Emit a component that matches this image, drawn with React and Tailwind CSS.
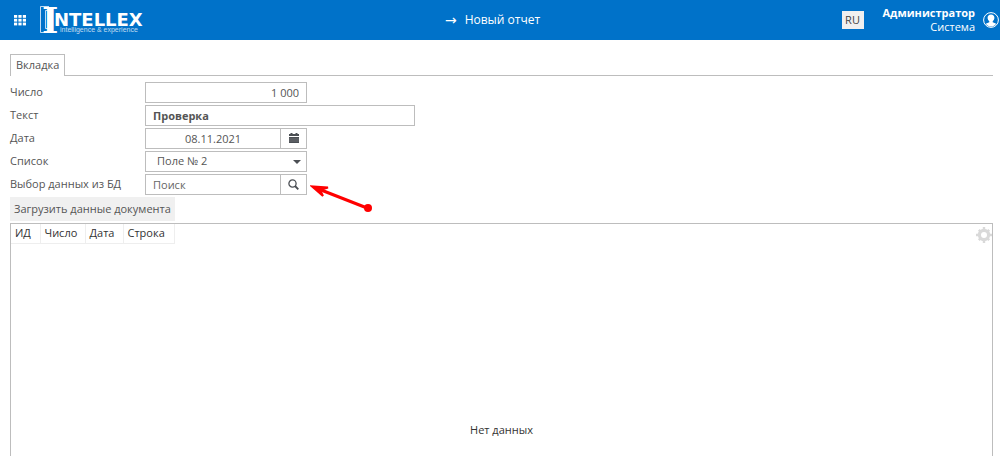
import React, { useState } from "react";

const columns = ["ИД", "Число", "Дата", "Строка"];
const columnWidths = ["w-[29px]", "w-[45px]", "w-[38px]", "w-[51px]"];

const fieldBox = "h-[21px] border border-[#bdbdbd] bg-white";

function Logo() {
  return (
    <svg width="103" height="40" viewBox="0 0 103 40" fill="#fff" role="img" aria-label="Intellex">
      <path d="M9 6.500H.5V32.500H9M8 10.500H5.500V28.500H8" fill="none" stroke="#fff" strokeOpacity="0.75" />
      <text x="2" y="33" fontSize="35" fontWeight="bold" fontFamily="DejaVu Serif, serif">I</text>
      <text x="14" y="26" fontSize="18" fontWeight="bold" fontFamily="DejaVu Sans, sans-serif">NTELLEX</text>
      <text x="20" y="32" fontSize="7" fillOpacity="0.75" fontFamily="Liberation Sans, sans-serif">intelligence &amp; experience</text>
    </svg>
  );
}

function AppsIcon() {
  return (
    <svg width="12" height="11" viewBox="0 0 12 11" fill="#fff" aria-hidden="true">
      {[0, 4.4, 8.8].map((x) =>
        [0, 3.8, 7.6].map((y) => <rect key={`${x}-${y}`} x={x} y={y} width="3.2" height="2.8" />)
      )}
    </svg>
  );
}

function UserIcon() {
  return (
    <svg width="16" height="16" viewBox="0 0 16 16" aria-hidden="true">
      <circle cx="8" cy="8" r="7.4" fill="none" stroke="#fff" />
      <path d="M8 2.400c-2.200 0-3.400 1.400-3.400 3.400 0 1.500.7 2.800 1.700 3.500v1L2.800 11.800C4 13.700 5.900 14.600 8 14.600s4-.9 5.200-2.800L9.700 10.300v-1c1-.7 1.700-2 1.700-3.500 0-2-1.200-3.400-3.400-3.400z" fill="#fff" />
    </svg>
  );
}

function CalendarIcon() {
  return (
    <svg width="10" height="11" viewBox="0 0 10 11" fill="#4b4f54" aria-hidden="true">
      <path d="M0 1h1.500V0h2v1h3V0h2v1H10v2H0z" />
      <path d="M0 4h10v6H0z" />
      <path d="M0 6h10M0 8h10" stroke="#fff" strokeOpacity=".3" strokeWidth=".6" />
    </svg>
  );
}

function SearchIcon() {
  return (
    <svg width="11" height="11" viewBox="0 0 11 11" fill="none" stroke="#4b4f54" aria-hidden="true">
      <circle cx="4.5" cy="4.5" r="3.6" strokeWidth="1.300" />
      <path d="M7 7l3.300 3.300" strokeWidth="1.900" />
    </svg>
  );
}

function GearIcon() {
  return (
    <svg width="16" height="16" viewBox="0 0 16 16" fill="none" stroke="#d9d9d9" aria-hidden="true">
      <circle cx="8" cy="8" r="4.600" strokeWidth="3.200" />
      <path d="M8 0v3M8 13v3M0 8h3M13 8h3M2.800 2.800l2 2M11.200 11.200l2 2M2.800 13.200l2-2M11.200 4.800l2-2" strokeWidth="2.400" />
    </svg>
  );
}

// red arrow pointing at the search button
function Pointer() {
  return (
    <svg className="pointer-events-none absolute left-[165px] top-[9px]" width="64" height="30" viewBox="0 0 64 30" aria-hidden="true">
      <path d="M57 25L6 5" stroke="#f00" strokeWidth="3" />
      <path d="M18 4.500L2 3.500L13 13L10 7Z" fill="#f00" stroke="#f00" strokeWidth="2" />
      <circle cx="58" cy="25" r="4" fill="#f00" />
    </svg>
  );
}

function Row({ id, label, children }) {
  return (
    <div className="flex h-[21px] items-center">
      <label htmlFor={id} className="w-[135px] shrink-0">{label}</label>
      {children}
    </div>
  );
}

function Header() {
  return (
    <header className="flex h-10 items-center bg-[#0072c9] pr-px text-white">
      <div className="flex flex-1 items-center">
        <button type="button" aria-label="Меню" className="ml-[14px] mr-[14px]"><AppsIcon /></button>
        <Logo />
      </div>
      <h1 className="flex items-center gap-2 pr-[14px] text-[12px] leading-5">
        <span className="font-['DejaVu_Sans',sans-serif] text-[14px]">→</span>
        <span>Новый отчет</span>
      </h1>
      <div className="flex flex-1 items-center justify-end">
        <button type="button" className="mr-[19px] h-[18px] w-[22px] bg-[#f0f0f0] text-[11px] leading-[18px] text-[#444]">RU</button>
        <div className="mr-2 text-right text-[11px] leading-[14px]">
          <div className="font-bold">Администратор</div>
          <div>Система</div>
        </div>
        <button type="button" aria-label="Профиль"><UserIcon /></button>
      </div>
    </header>
  );
}

function App() {
  const [number, setNumber] = useState("1 000");
  const [text, setText] = useState("Проверка");
  const [date, setDate] = useState("08.11.2021");
  const [item, setItem] = useState("2");
  const [search, setSearch] = useState("");

  return (
    <div className="flex min-h-screen flex-col bg-white font-['Open_Sans',sans-serif] text-[11px] text-[#555]">
      <Header />

      <main className="ml-[10px] mr-[7px] flex flex-1 flex-col pt-[14px]">
        <div role="tablist" className="flex border-b border-[#bdbdbd]">
          <button type="button" role="tab" aria-selected="true" className="-mb-px h-[22px] border border-b-0 border-[#bdbdbd] bg-white px-[5px]">
            Вкладка
          </button>
        </div>

        <form className="mt-[6px] flex flex-col gap-[2px]" onSubmit={(e) => e.preventDefault()}>
          <Row id="number" label="Число">
            <input id="number" value={number} onChange={(e) => setNumber(e.target.value)} className={`${fieldBox} w-[162px] px-[7px] text-right`} />
          </Row>
          <Row id="text" label="Текст">
            <input id="text" value={text} onChange={(e) => setText(e.target.value)} className={`${fieldBox} w-[270px] px-[7px] font-bold`} />
          </Row>
          <Row id="date" label="Дата">
            <input id="date" value={date} onChange={(e) => setDate(e.target.value)} className={`${fieldBox} w-[136px] text-center`} />
            <button type="button" aria-label="Календарь" className={`${fieldBox} -ml-px flex w-[27px] items-center justify-center`}><CalendarIcon /></button>
          </Row>
          <Row id="list" label="Список">
            <div className="relative">
              <select id="list" value={item} onChange={(e) => setItem(e.target.value)} className={`${fieldBox} block w-[162px] appearance-none px-[11px]`}>
                <option value="1">Поле № 1</option>
                <option value="2">Поле № 2</option>
              </select>
              <svg className="pointer-events-none absolute right-[6px] top-[9px]" width="8" height="4" viewBox="0 0 8 4" fill="#4b4f54" aria-hidden="true">
                <path d="M0 0h8L4 4z" />
              </svg>
            </div>
          </Row>
          <Row id="search" label="Выбор данных из БД">
            <div className="relative flex">
              <input id="search" value={search} placeholder="Поиск" onChange={(e) => setSearch(e.target.value)} className={`${fieldBox} w-[136px] px-[7px] placeholder:text-[#666]`} />
              <button type="button" aria-label="Найти" className={`${fieldBox} -ml-px flex w-[27px] items-center justify-center`}><SearchIcon /></button>
              <Pointer />
            </div>
          </Row>
        </form>

        <button type="button" className="mt-[2px] h-6 self-start bg-[#f0f0f0] px-1">
          Загрузить данные документа
        </button>

        <section className="relative mt-[2px] flex flex-1 flex-col border border-b-0 border-[#bdbdbd]">
          <table className="table-fixed self-start text-left text-[#333]">
            <thead>
              <tr>
                {columns.map((name, i) => (
                  <th key={name} className={`${columnWidths[i]} h-[19px] border-b border-r border-[#eee] p-0 pl-1 font-normal leading-[18px]`}>
                    {name}
                  </th>
                ))}
              </tr>
            </thead>
          </table>
          <button type="button" aria-label="Настройки" className="absolute right-0 top-[3px]"><GearIcon /></button>
          <p className="mt-auto pb-[18px] text-center text-[#333]">Нет данных</p>
        </section>
      </main>
    </div>
  );
}

export default App;
